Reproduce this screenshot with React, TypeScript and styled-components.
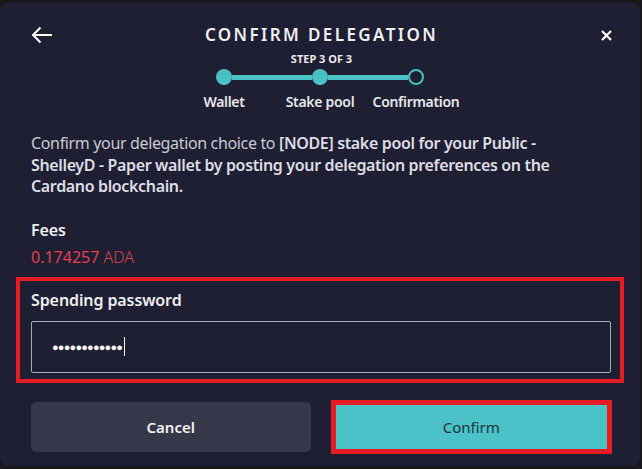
import styled, { createGlobalStyle } from 'styled-components'

const GlobalStyle = createGlobalStyle`
  html, body {
    margin: 0;
    padding: 0;
    background: #17171c;
  }
  body {
    font-family: 'Noto Sans', 'Open Sans', sans-serif;
  }
`

const Page = styled.div`
  width: 642px;
  height: 469px;
  padding: 3px 2px 3px 0;
  box-sizing: border-box;
`

const Dialog = styled.div`
  height: 100%;
  box-sizing: border-box;
  background: #1e1f33;
  border-radius: 8px;
  padding: 20px 28px 0 31px;
  color: #e9eaee;
`

const Header = styled.div`
  display: grid;
  grid-template-columns: 40px 1fr 40px;
  align-items: center;
  height: 24px;
`

const IconButton = styled.button<{ $align: 'left' | 'right' }>`
  background: none;
  border: none;
  padding: 0;
  display: flex;
  justify-content: ${(p) => (p.$align === 'left' ? 'flex-start' : 'flex-end')};
  color: #ffffff;
  cursor: pointer;
`

const Title = styled.h1`
  margin: 0;
  text-align: center;
  font-size: 17px;
  font-weight: 600;
  letter-spacing: 2.4px;
  line-height: 24px;
  color: #eeeff3;
`

const StepCount = styled.div`
  margin-top: 5px;
  text-align: center;
  font-size: 11px;
  font-weight: 700;
  line-height: 14px;
  color: #e9eaee;
`

const Track = styled.div`
  margin-top: 3px;
  display: flex;
  align-items: center;
  justify-content: center;
  padding-right: 3px;
`

const Dot = styled.span<{ $done: boolean }>`
  width: 16px;
  height: 16px;
  border-radius: 50%;
  box-sizing: border-box;
  background: ${(p) => (p.$done ? '#49c1c4' : '#1e1f33')};
  border: 2px solid #49c1c4;
`

const Line = styled.span`
  width: 80px;
  height: 5px;
  background: #49c1c4;
`

const Labels = styled.div`
  margin-top: 8px;
  display: grid;
  grid-template-columns: repeat(3, 96px);
  justify-content: center;
  padding-right: 3px;
`

const StepLabel = styled.span`
  text-align: center;
  white-space: nowrap;
  font-size: 14px;
  font-weight: 600;
  line-height: 18px;
  color: #e6e7ec;
  letter-spacing: -0.3px;
`

const Intro = styled.p`
  margin: 22px 0 0;
  max-width: 560px;
  font-size: 16px;
  line-height: 21.5px;
  letter-spacing: -0.35px;
  color: #c9cad2;

  b {
    font-weight: 600;
    color: #dcdde3;
  }
`

const FieldLabel = styled.div`
  font-size: 16px;
  font-weight: 600;
  line-height: 21px;
  letter-spacing: -0.1px;
  color: #eceef2;
`

const FeesLabel = styled(FieldLabel)`
  margin-top: 22px;
`

const FeesValue = styled.div`
  margin-top: 6px;
  font-size: 16px;
  line-height: 21px;
  color: #e3404e;

  span {
    font-weight: 300;
    color: #d9414f;
  }
`

const Highlight = styled.div`
  margin: 9px 0 0 -15px;
  width: 608px;
  box-sizing: border-box;
  border: 4px solid #e61c24;
  padding: 9px 9px 6px 11px;
`

const PasswordBox = styled.div`
  margin-top: 10px;
  height: 52px;
  box-sizing: border-box;
  border: 1px solid #a9aab4;
  border-radius: 2px;
  display: flex;
  align-items: center;
  padding-left: 20px;
`

const Bullets = styled.span`
  font-size: 11px;
  letter-spacing: -0.8px;
  color: #f2f2f5;
`

const Caret = styled.span`
  width: 1px;
  height: 19px;
  margin-left: 2px;
  background: #f2f2f5;
`

const Actions = styled.div`
  margin-top: 17px;
  display: flex;
  align-items: center;
  gap: 20px;
`

const Button = styled.button<{ $primary?: boolean }>`
  font-family: inherit;
  font-size: 15px;
  line-height: 20px;
  box-sizing: border-box;
  cursor: pointer;
  width: ${(p) => (p.$primary ? '282px' : '280px')};
  height: ${(p) => (p.$primary ? '54px' : '50px')};
  border-radius: ${(p) => (p.$primary ? '0' : '5px')};
  border: ${(p) => (p.$primary ? '5px solid #e61c24' : 'none')};
  background: ${(p) => (p.$primary ? '#4bc2c6' : '#363748')};
  color: ${(p) => (p.$primary ? '#1e3440' : '#f0f0f4')};
  font-weight: ${(p) => (p.$primary ? 400 : 600)};
`

function App() {
  return (
    <Page>
      <GlobalStyle />
      <Dialog>
        <Header>
          <IconButton $align="left" aria-label="Back">
            <svg width="22" height="18" viewBox="0 0 22 18" fill="none" stroke="currentColor" strokeWidth="2">
              <path d="M21 9H2" />
              <path d="M9.5 1.5L2 9l7.5 7.5" />
            </svg>
          </IconButton>
          <Title>CONFIRM DELEGATION</Title>
          <IconButton $align="right" aria-label="Close">
            <svg width="11" height="11" viewBox="0 0 11 11" stroke="currentColor" strokeWidth="2.2">
              <path d="M1 1l9 9M10 1l-9 9" />
            </svg>
          </IconButton>
        </Header>

        <StepCount>STEP 3 OF 3</StepCount>
        <Track>
          <Dot $done />
          <Line />
          <Dot $done />
          <Line />
          <Dot $done={false} />
        </Track>
        <Labels>
          <StepLabel>Wallet</StepLabel>
          <StepLabel>Stake pool</StepLabel>
          <StepLabel>Confirmation</StepLabel>
        </Labels>

        <Intro>
          Confirm your delegation choice to <b>[NODE] stake pool for your Public - ShelleyD - Paper wallet by posting your delegation preferences on the Cardano blockchain.</b>
        </Intro>

        <FeesLabel>Fees</FeesLabel>
        <FeesValue>
          0.174257 <span>ADA</span>
        </FeesValue>

        <Highlight>
          <FieldLabel>Spending password</FieldLabel>
          <PasswordBox>
            <Bullets>●●●●●●●●●●●●</Bullets>
            <Caret />
          </PasswordBox>
        </Highlight>

        <Actions>
          <Button>Cancel</Button>
          <Button $primary>Confirm</Button>
        </Actions>
      </Dialog>
    </Page>
  )
}

export default App
